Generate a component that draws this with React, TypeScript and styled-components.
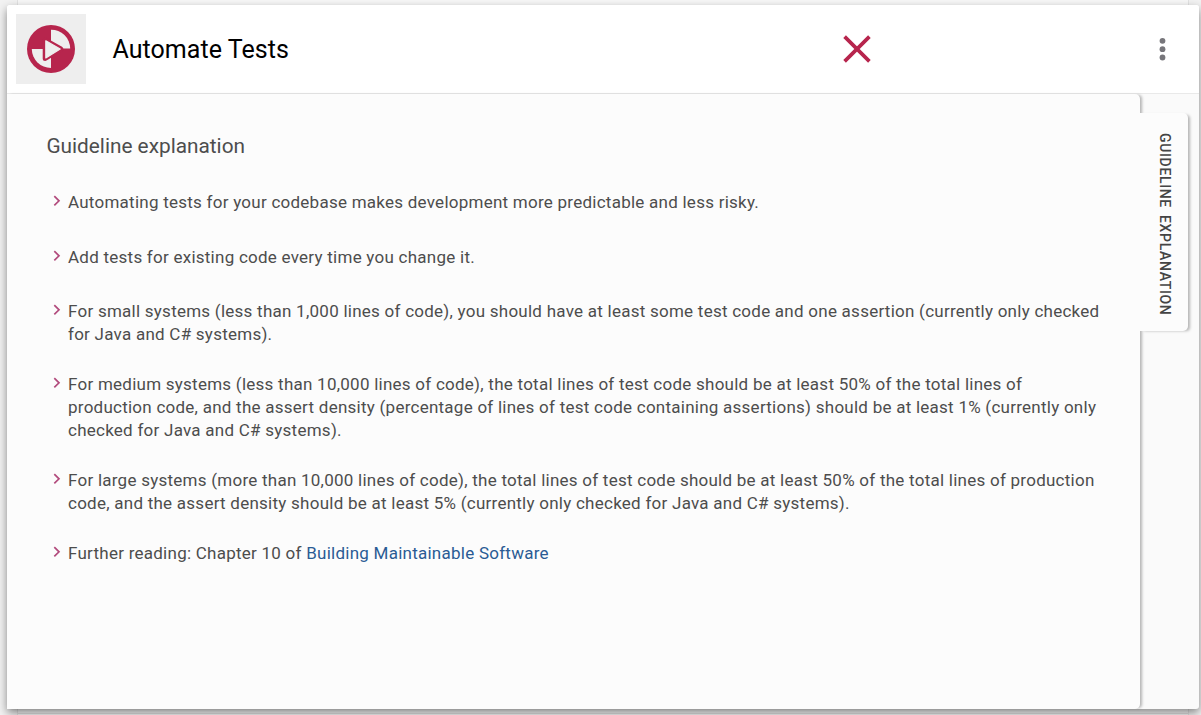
import React from "react";
import styled, { createGlobalStyle } from "styled-components";

const GlobalStyle = createGlobalStyle`
  *, *::before, *::after { box-sizing: border-box; }
  body {
    margin: 0;
    font-family: Roboto, "Liberation Sans", sans-serif;
    background: #f0f0f0;
    overflow: hidden;
  }
`;

const Page = styled.div`
  height: 715px;
  padding: 0 12px 0 17px;
  background: #f2f2f2;
`;

const Backdrop = styled.div`
  height: 715px;
  border: solid #e2e2e2;
  border-width: 0 1px;
  background: linear-gradient(#f7f7f7 0 713px, #e2e2e2 713px 714px, #f7f7f7 714px);
  padding-top: 5px;
`;

const Card = styled.main`
  display: flex;
  flex-direction: column;
  height: 704px;
  margin: 0 -11px 0 -11px;
  border-radius: 3px;
  background: #fafafa;
  box-shadow: 0 4px 10px rgba(0, 0, 0, 0.45);
`;

const Header = styled.header`
  display: flex;
  align-items: center;
  height: 89px;
  flex: none;
  padding: 0 33px 0 9px;
  border-bottom: 1px solid #e9e9e9;
  border-radius: 3px 3px 0 0;
  background: #fff;
`;

const Logo = styled.div`
  display: grid;
  place-items: center;
  width: 70px;
  height: 70px;
  margin-right: 26.5px;
  background: #eee;
`;

const Title = styled.h1`
  flex: 0 0 730.5px;
  margin: 0;
  padding-top: 2px;
  font-size: 25px;
  line-height: 30px;
  font-weight: 400;
  letter-spacing: 0.05px;
  color: #000;
`;

const MenuButton = styled.button`
  display: flex;
  margin-left: auto;
  padding: 0;
  border: 0;
  background: none;
`;

const Body = styled.div`
  display: flex;
  flex: 1;
  min-height: 0;
`;

const Panel = styled.section`
  width: 1133px;
  padding: 38px 0 0 39.4px;
  border-radius: 0 5px 5px 0;
  background: #fcfcfc;
  box-shadow: 3px 0 3px -1px rgba(0, 0, 0, 0.28);
  color: #4d4d4d;
`;

const Heading = styled.h2`
  margin: 0 0 31px;
  font-size: 20.8px;
  line-height: 28px;
  font-weight: 400;
`;

const List = styled.ul`
  display: flex;
  flex-direction: column;
  gap: 27.6px;
  margin: 0;
  padding: 0 0 0 6.6px;
  list-style: none;
`;

const Item = styled.li`
  display: flex;
  gap: 7px;
  min-height: 27.1px;
  font-size: 17px;
  line-height: 22.67px;
  letter-spacing: 0.25px;
  white-space: nowrap;

  > svg {
    flex: none;
    margin-top: 4px;
  }
`;

const Link = styled.a`
  color: #2a5b94;
  text-decoration: none;
`;

const Tab = styled.div`
  display: flex;
  align-items: center;
  justify-content: center;
  width: 48px;
  height: 218px;
  margin-top: 19px;
  padding: 4px 0 0 2px;
  position: relative;
  border-radius: 0 5px 5px 0;
  background: #fcfcfc;
  box-shadow: 3px 1px 3px -1px rgba(0, 0, 0, 0.28);
`;

const TabLabel = styled.span`
  writing-mode: vertical-rl;
  font-size: 14px;
  line-height: 18px;
  font-weight: 500;
  letter-spacing: 0.65px;
  word-spacing: 3px;
  white-space: nowrap;
  color: #444;
`;

const items: React.ReactNode[][] = [
  ["Automating tests for your codebase makes development more predictable and less risky."],
  ["Add tests for existing code every time you change it."],
  [
    "For small systems (less than 1,000 lines of code), you should have at least some test code and one assertion (currently only checked",
    "for Java and C# systems).",
  ],
  [
    "For medium systems (less than 10,000 lines of code), the total lines of test code should be at least 50% of the total lines of",
    "production code, and the assert density (percentage of lines of test code containing assertions) should be at least 1% (currently only",
    "checked for Java and C# systems).",
  ],
  [
    "For large systems (more than 10,000 lines of code), the total lines of test code should be at least 50% of the total lines of production",
    "code, and the assert density should be at least 5% (currently only checked for Java and C# systems).",
  ],
  [<>Further reading: Chapter 10 of <Link>Building Maintainable Software</Link></>],
];

const LogoIcon = () => (
  <svg width="48" height="48" viewBox="0 0 48 48">
    <circle cx="24" cy="24" r="24" fill="#b7254d" />
    <path d="M24 4.7A19 19 0 0 1 43.2 23.4H24Z" fill="#eee" />
    <path d="M4.8 24A19.2 19.2 0 0 0 24 43V24Z" fill="#eee" />
    <path
      d="M18.2 15.3V33.4L33.8 24Z"
      fill="#b7254d"
      stroke="#b7254d"
      strokeWidth="5"
      strokeLinejoin="round"
    />
    <path
      d="M18.8 15.8V33L33.2 24Z"
      fill="#eee"
      stroke="#eee"
      strokeWidth="1.2"
      strokeLinejoin="round"
    />
  </svg>
);

const CrossIcon = () => (
  <svg width="28" height="28" viewBox="0 0 28 28">
    <path d="M1.6 1.6L26.4 26.4M26.4 1.6L1.6 26.4" stroke="#b7254d" strokeWidth="3.7" />
  </svg>
);

const DotsIcon = () => (
  <svg width="7" height="24" viewBox="0 0 7 24" fill="#77767b">
    <circle cx="3.5" cy="3.8" r="2.9" />
    <circle cx="3.5" cy="12.2" r="2.9" />
    <circle cx="3.5" cy="20.5" r="2.9" />
  </svg>
);

const ChevronIcon = () => (
  <svg width="8" height="12" viewBox="0 0 8 12">
    <path d="M1.3 1.2L6 5.8L1.3 10.4" fill="none" stroke="#b24b7d" strokeWidth="1.7" />
  </svg>
);

export default function App() {
  return (
    <>
      <GlobalStyle />
      <Page>
        <Backdrop>
          <Card>
            <Header>
              <Logo><LogoIcon /></Logo>
              <Title>Automate Tests</Title>
              <CrossIcon />
              <MenuButton aria-label="Menu"><DotsIcon /></MenuButton>
            </Header>
            <Body>
              <Panel>
                <Heading>Guideline explanation</Heading>
                <List>
                  {items.map((lines, i) => (
                    <Item key={i}>
                      <ChevronIcon />
                      <div>{lines.map((line, j) => <div key={j}>{line}</div>)}</div>
                    </Item>
                  ))}
                </List>
              </Panel>
              <Tab><TabLabel>GUIDELINE EXPLANATION</TabLabel></Tab>
            </Body>
          </Card>
        </Backdrop>
      </Page>
    </>
  );
}
